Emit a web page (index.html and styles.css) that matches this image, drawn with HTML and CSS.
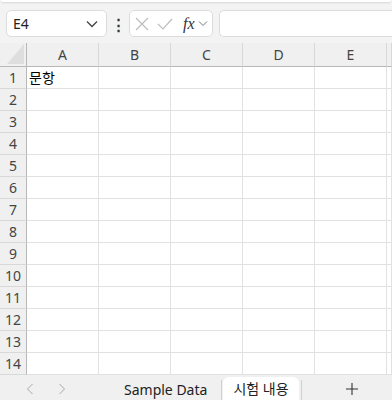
FILE: index.html
```html
<!DOCTYPE html>
<html lang="ko">
<head>
    <meta charset="UTF-8">
    <meta name="viewport" content="width=device-width, initial-scale=1.0">
    <title>시험 내용</title>
    <link rel="stylesheet" href="styles.css">
</head>
<body>
    <div class="ribbon-edge"></div>

    <div class="formula-bar">
        <div class="name-box">
            <span>E4</span>
            <svg class="chev" width="12" height="8" viewBox="0 0 12 8"><path d="M1 1.5 L6 6.5 L11 1.5" fill="none" stroke="#444" stroke-width="1.3"/></svg>
        </div>
        <div class="more">&#8942;</div>
        <div class="fx-box">
            <svg width="14" height="14" viewBox="0 0 14 14"><path d="M1 1 L13 13 M13 1 L1 13" stroke="#bdbdbd" stroke-width="1.2"/></svg>
            <svg width="16" height="14" viewBox="0 0 16 14"><path d="M1 7 L6 12 L15 2" fill="none" stroke="#bdbdbd" stroke-width="1.2"/></svg>
            <span class="fx">fx</span>
            <svg width="10" height="7" viewBox="0 0 10 7"><path d="M1 1.5 L5 5.5 L9 1.5" fill="none" stroke="#777" stroke-width="1"/></svg>
        </div>
        <div class="formula-input"></div>
    </div>

    <div class="sheet" id="sheet">
        <div class="corner"><span class="tri"></span></div>
        <div class="col-head">A</div>
        <div class="col-head">B</div>
        <div class="col-head">C</div>
        <div class="col-head">D</div>
        <div class="col-head">E</div>
        <div class="col-head"></div>
    </div>

    <div class="tab-bar">
        <span class="nav"><svg width="8" height="12" viewBox="0 0 8 12"><path d="M6.5 1 L1.5 6 L6.5 11" fill="none" stroke="#a8a8a8" stroke-width="1"/></svg></span>
        <span class="nav"><svg width="8" height="12" viewBox="0 0 8 12"><path d="M1.5 1 L6.5 6 L1.5 11" fill="none" stroke="#a8a8a8" stroke-width="1"/></svg></span>
        <span class="tab">Sample Data</span>
        <span class="sep"></span>
        <span class="tab active">시험 내용</span>
        <span class="sep"></span>
        <span class="add"><svg width="12" height="12" viewBox="0 0 12 12"><path d="M6 0 V12 M0 6 H12" stroke="#333" stroke-width="1.1"/></svg></span>
    </div>

    <script>
        // linhas da planilha
        var sheet = document.getElementById('sheet');
        for (var r = 1; r <= 14; r++) {
            var head = document.createElement('div');
            head.className = 'row-head';
            head.textContent = r;
            sheet.appendChild(head);
            for (var c = 0; c < 6; c++) {
                var cell = document.createElement('div');
                cell.className = 'cell';
                if (r === 1 && c === 0) cell.textContent = '문항';
                sheet.appendChild(cell);
            }
        }
    </script>
</body>
</html>
```

FILE: styles.css
```css
body {
    margin: 0;
    width: 392px;
    height: 400px;
    overflow: hidden;
    background-color: #f3f3f3;
    font-family: "Noto Sans", "Noto Sans CJK KR", sans-serif;
    color: #222;
}
.ribbon-edge {
    height: 2px;
    margin: 0 1px;
    background-color: #fff;
    border-radius: 0 0 6px 6px;
    box-shadow: 0 1px 2px rgba(0, 0, 0, 0.12);
}
.formula-bar {
    display: flex;
    align-items: center;
    height: 27px;
    margin-top: 8px;
    padding-left: 6px;
    overflow: hidden;
}
.name-box,
.fx-box,
.formula-input {
    box-sizing: border-box;
    height: 27px;
    background-color: #fff;
    border: 1px solid #dcdcdc;
    border-radius: 5px;
    display: flex;
    align-items: center;
}
.name-box {
    width: 101px;
    padding: 0 8px 0 6px;
    justify-content: space-between;
    font-size: 14px;
}
.more {
    width: 22px;
    text-align: center;
    font-size: 15px;
    font-weight: bold;
    color: #333;
}
.fx-box {
    width: 84px;
    padding-left: 5px;
    gap: 8px;
}
.fx-box .fx {
    font-family: "Liberation Serif", serif;
    font-style: italic;
    font-size: 16px;
    margin-left: 2px;
    margin-right: -5px;
    color: #333;
}
.formula-input {
    flex: 1;
    margin-left: 6px;
    border-right: none;
    border-radius: 5px 0 0 5px;
}
.sheet {
    display: grid;
    grid-template-columns: 27px repeat(5, 72px) 5px;
    grid-template-rows: 24px repeat(14, 22px);
    margin-top: 6px;
    background-color: #fff;
    overflow: hidden;
}
.sheet > div {
    box-sizing: border-box;
    border-right: 1px solid #e1e1e1;
    border-bottom: 1px solid #e1e1e1;
}
.sheet .corner,
.sheet .col-head,
.sheet .row-head {
    background-color: #f0f0f0;
    color: #444;
    font-size: 14px;
}
.sheet .corner {
    position: relative;
    border-right: 1px solid #b8b8b8;
    border-bottom: 1px solid #b8b8b8;
}
.tri {
    position: absolute;
    right: 2px;
    bottom: 2px;
    width: 0;
    height: 0;
    border-left: 17px solid transparent;
    border-bottom: 20px solid #dedede;
}
.sheet .col-head {
    text-align: center;
    line-height: 23px;
    border-bottom: 1px solid #b8b8b8;
    border-right-color: #d8d8d8;
}
.sheet .row-head {
    text-align: center;
    line-height: 21px;
    border-right: 1px solid #b8b8b8;
    border-bottom-color: #d8d8d8;
}
.sheet .cell {
    font-size: 14px;
    line-height: 21px;
    padding-left: 2px;
    color: #000;
}
.tab-bar {
    display: flex;
    align-items: flex-end;
    height: 25px;
    background-color: #f0f0f0;
    font-size: 14px;
    white-space: nowrap;
    overflow: hidden;
}
.tab-bar > span {
    flex-shrink: 0;
}
.nav {
    width: 32px;
    height: 22px;
    display: flex;
    align-items: center;
    justify-content: center;
}
.nav:first-child {
    margin-left: 14px;
}
.tab {
    line-height: 20px;
    padding: 0 14px 0 16px;
}
.tab:nth-child(3) {
    margin-left: 30px;
}
.tab.active {
    background-color: #fff;
    border-radius: 6px 6px 0 0;
    line-height: 23px;
    padding: 0 10px;
    margin: 0 2px 0 1px;
}
.sep {
    width: 1px;
    height: 20px;
    background-color: #d0d0d0;
}
.add {
    width: 92px;
    height: 22px;
    margin-left: 4px;
    display: flex;
    align-items: center;
    justify-content: center;
}
```
